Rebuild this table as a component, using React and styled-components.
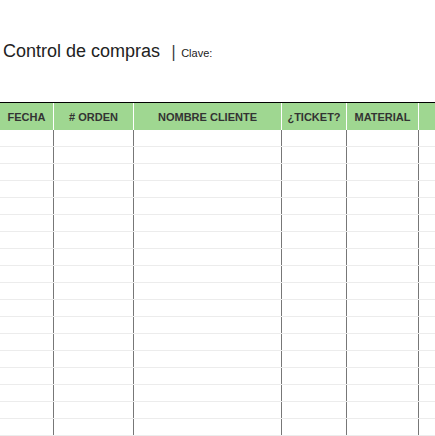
import React from 'react';
import styled, {createGlobalStyle} from "styled-components";

const columns = [
    {label: 'FECHA', width: '53px'},
    {label: '# ORDEN', width: '80px'},
    {label: 'NOMBRE CLIENTE', width: '148px'},
    {label: '¿TICKET?', width: '65px'},
    {label: 'MATERIAL', width: '72px'},
    {label: '', width: '1fr'},
];

const template = columns.map(c => c.width).join(' ');
const rows = Array.from({length: 18});

function App() {
    return (
        <>
            <GlobalStyle/>
            <Page>
                <TitleRow>
                    <Title>Control de compras</Title>
                    <Divider>|</Divider>
                    <Key>Clave:</Key>
                </TitleRow>
                <Sheet>
                    <HeaderRow $template={template}>
                        {columns.map((c, i) => (
                            <HeadCell key={i} $first={i === 0}>{c.label}</HeadCell>
                        ))}
                    </HeaderRow>
                    {rows.map((_, r) => (
                        <BodyRow key={r} $template={template}>
                            {columns.map((c, i) => (
                                <BodyCell key={i} $first={i === 0}/>
                            ))}
                        </BodyRow>
                    ))}
                </Sheet>
            </Page>
        </>
    );
}

const GlobalStyle = createGlobalStyle`
  * { box-sizing: border-box; }
  html, body {
    margin: 0;
    padding: 0;
    background: #fff;
    overflow: hidden;
    font-family: "Liberation Sans", Arial, sans-serif;
  }
`;

const Page = styled.div`
  width: 435px;
  height: 436px;
  overflow: hidden;
`;

const TitleRow = styled.div`
  display: flex;
  align-items: baseline;
  padding: 41px 0 0 3px;
  height: 102px;
  color: #222;
`;

const Title = styled.span`
  font-size: 18px;
  line-height: 21px;
`;

const Divider = styled.span`
  font-family: "DejaVu Sans", sans-serif;
  font-size: 15px;
  color: #333;
  margin: 0 5px 0 11px;
`;

const Key = styled.span`
  font-size: 11px;
  color: #222;
`;

const Sheet = styled.div`
  border-top: 1px solid #000;
`;

const HeaderRow = styled.div`
  display: grid;
  grid-template-columns: ${p => p.$template};
  height: 27px;
  background: #9fd791;
`;

const HeadCell = styled.div`
  display: flex;
  align-items: center;
  justify-content: center;
  border-left: ${p => p.$first ? 'none' : '1px solid #fff'};
  font-size: 11px;
  font-weight: bold;
  color: #333;
  white-space: nowrap;
`;

const BodyRow = styled.div`
  display: grid;
  grid-template-columns: ${p => p.$template};
  height: 17px;
  border-bottom: 1px solid #ececec;
`;

const BodyCell = styled.div`
  border-left: ${p => p.$first ? 'none' : '1px solid #777'};
`;

export default App;
